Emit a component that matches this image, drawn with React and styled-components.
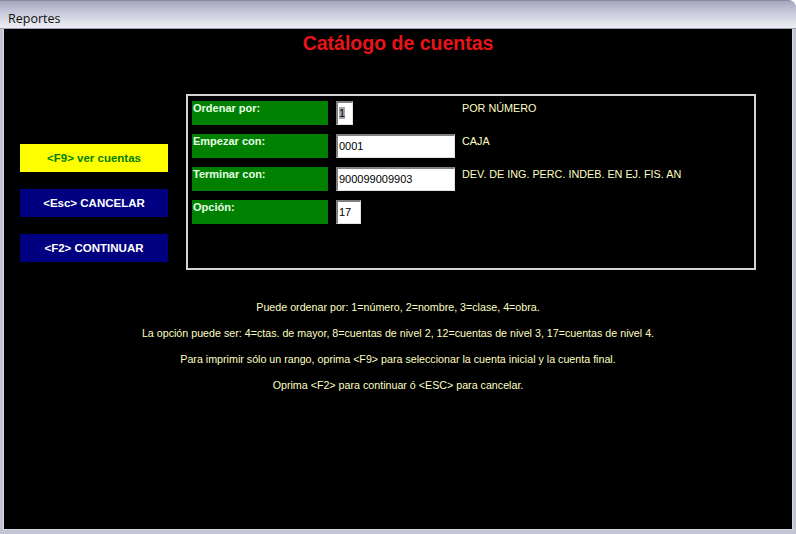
import React from 'react';
import styled, {createGlobalStyle} from 'styled-components';

const GlobalStyle = createGlobalStyle`
  html, body {
    margin: 0;
    padding: 0;
    background: #fff;
  }
  #root {
    width: 796px;
    height: 534px;
  }
`;

const rows = [
    {label: 'Ordenar por:', value: '1', width: 17, selected: true, desc: 'POR NÚMERO'},
    {label: 'Empezar con:', value: '0001', width: 119, desc: 'CAJA'},
    {label: 'Terminar con:', value: '900099009903', width: 119, desc: 'DEV. DE ING. PERC. INDEB. EN EJ. FIS. AN'},
    {label: 'Opción:', value: '17', width: 25, desc: ''},
]

const help = [
    'Puede ordenar por: 1=número, 2=nombre, 3=clase, 4=obra.',
    'La opción puede ser: 4=ctas. de mayor, 8=cuentas de nivel 2, 12=cuentas de nivel 3, 17=cuentas de nivel 4.',
    'Para imprimir sólo un rango, oprima <F9> para seleccionar la cuenta inicial y la cuenta final.',
    'Oprima <F2> para continuar ó <ESC> para cancelar.',
]

const App = () => {
    return (
        <>
            <GlobalStyle/>
            <Window>
                <TitleBar>Reportes</TitleBar>
                <Content>
                    <Heading>Catálogo de cuentas</Heading>
                    <Main>
                        <Buttons>
                            <KeyButton $variant="yellow">&lt;F9&gt; ver cuentas</KeyButton>
                            <KeyButton>&lt;Esc&gt; CANCELAR</KeyButton>
                            <KeyButton>&lt;F2&gt; CONTINUAR</KeyButton>
                        </Buttons>
                        <Frame>
                            {rows.map((row, i) =>
                                <Row key={i}>
                                    <Label>{row.label}</Label>
                                    <Field style={{width: row.width}}>
                                        {row.selected ? <Selected>{row.value}</Selected> : row.value}
                                    </Field>
                                    <Desc>{row.desc}</Desc>
                                </Row>
                            )}
                        </Frame>
                    </Main>
                    <Help>
                        {help.map((line, i) => <HelpLine key={i}>{line}</HelpLine>)}
                    </Help>
                </Content>
            </Window>
        </>
    )
}

const Window = styled.div`
  width: 796px;
  height: 534px;
  display: flex;
  flex-direction: column;
  box-sizing: border-box;
  background: #c2c3d3;
  border-radius: 0 8px 0 0;
  overflow: hidden;
`;

const TitleBar = styled.div`
  height: 29px;
  flex: none;
  box-sizing: border-box;
  padding: 9px 0 0 8px;
  font-family: "Open Sans", "DejaVu Sans", sans-serif;
  font-size: 12.5px;
  color: #111;
  background: linear-gradient(#a4a6bd 0%, #c2c3d6 35%, #dfe0ea 75%, #eeeef4 100%);
  border-top: 1px solid #8a8ca4;
  border-bottom: 1px solid #9a9cb0;
`;

const Content = styled.div`
  flex: 1;
  margin: 0 3px 4px 3px;
  background: #000;
  border-left: 1px solid #d8d8e0;
  border-right: 1px solid #d8d8e0;
  border-bottom: 1px solid #d8d8e0;
  display: flex;
  flex-direction: column;
`;

const Heading = styled.h1`
  margin: 3px 0 0;
  text-align: center;
  font-family: "Liberation Sans", Arial, sans-serif;
  font-size: 19.5px;
  line-height: 22px;
  font-weight: bold;
  color: #e8141a;
`;

const Main = styled.div`
  display: flex;
  margin-top: 40px;
`;

const Buttons = styled.div`
  width: 148px;
  margin-left: 16px;
  padding-top: 50px;
  display: flex;
  flex-direction: column;
  gap: 17px;
`;

const KeyButton = styled.div`
  height: 28px;
  display: flex;
  align-items: center;
  justify-content: center;
  font-family: "Liberation Sans", Arial, sans-serif;
  font-size: 11.5px;
  font-weight: bold;
  background: ${p => p.$variant === 'yellow' ? '#ffff00' : '#000080'};
  color: ${p => p.$variant === 'yellow' ? '#008000' : '#fff'};
`;

const Frame = styled.div`
  width: 570px;
  height: 176px;
  box-sizing: border-box;
  margin-left: 18px;
  border: 2px solid #d4d4d4;
  padding: 5px 0 0 4px;
  display: flex;
  flex-direction: column;
  gap: 8px;
`;

const Row = styled.div`
  display: grid;
  grid-template-columns: 136px 134px 1fr;
  height: 25px;
`;

const Label = styled.div`
  background: #008000;
  color: #e6ffe6;
  font-family: "Liberation Sans", Arial, sans-serif;
  font-size: 11px;
  font-weight: bold;
  padding: 1px 0 0 1px;
  width: 136px;
  height: 24px;
  box-sizing: border-box;
`;

const Field = styled.div`
  margin-left: 8px;
  height: 24px;
  box-sizing: border-box;
  background: #fff;
  border-top: 2px solid #808080;
  border-left: 2px solid #808080;
  border-right: 1px solid #e0e0e0;
  border-bottom: 1px solid #e0e0e0;
  padding: 4px 0 0 1px;
  font-family: "Liberation Sans", Arial, sans-serif;
  font-size: 11px;
  line-height: 13px;
  color: #000;
`;

const Selected = styled.span`
  background: #a8a8a8;
`;

const Desc = styled.div`
  padding: 1px 0 0 0;
  color: #ffffc0;
  font-family: "Liberation Sans", Arial, sans-serif;
  font-size: 10.8px;
`;

const Help = styled.div`
  margin-top: 30px;
  display: flex;
  flex-direction: column;
  align-items: center;
  gap: 12px;
`;

const HelpLine = styled.div`
  color: #ffffc0;
  font-family: "Liberation Sans", Arial, sans-serif;
  font-size: 10.7px;
  line-height: 14px;
`;

export default App;
